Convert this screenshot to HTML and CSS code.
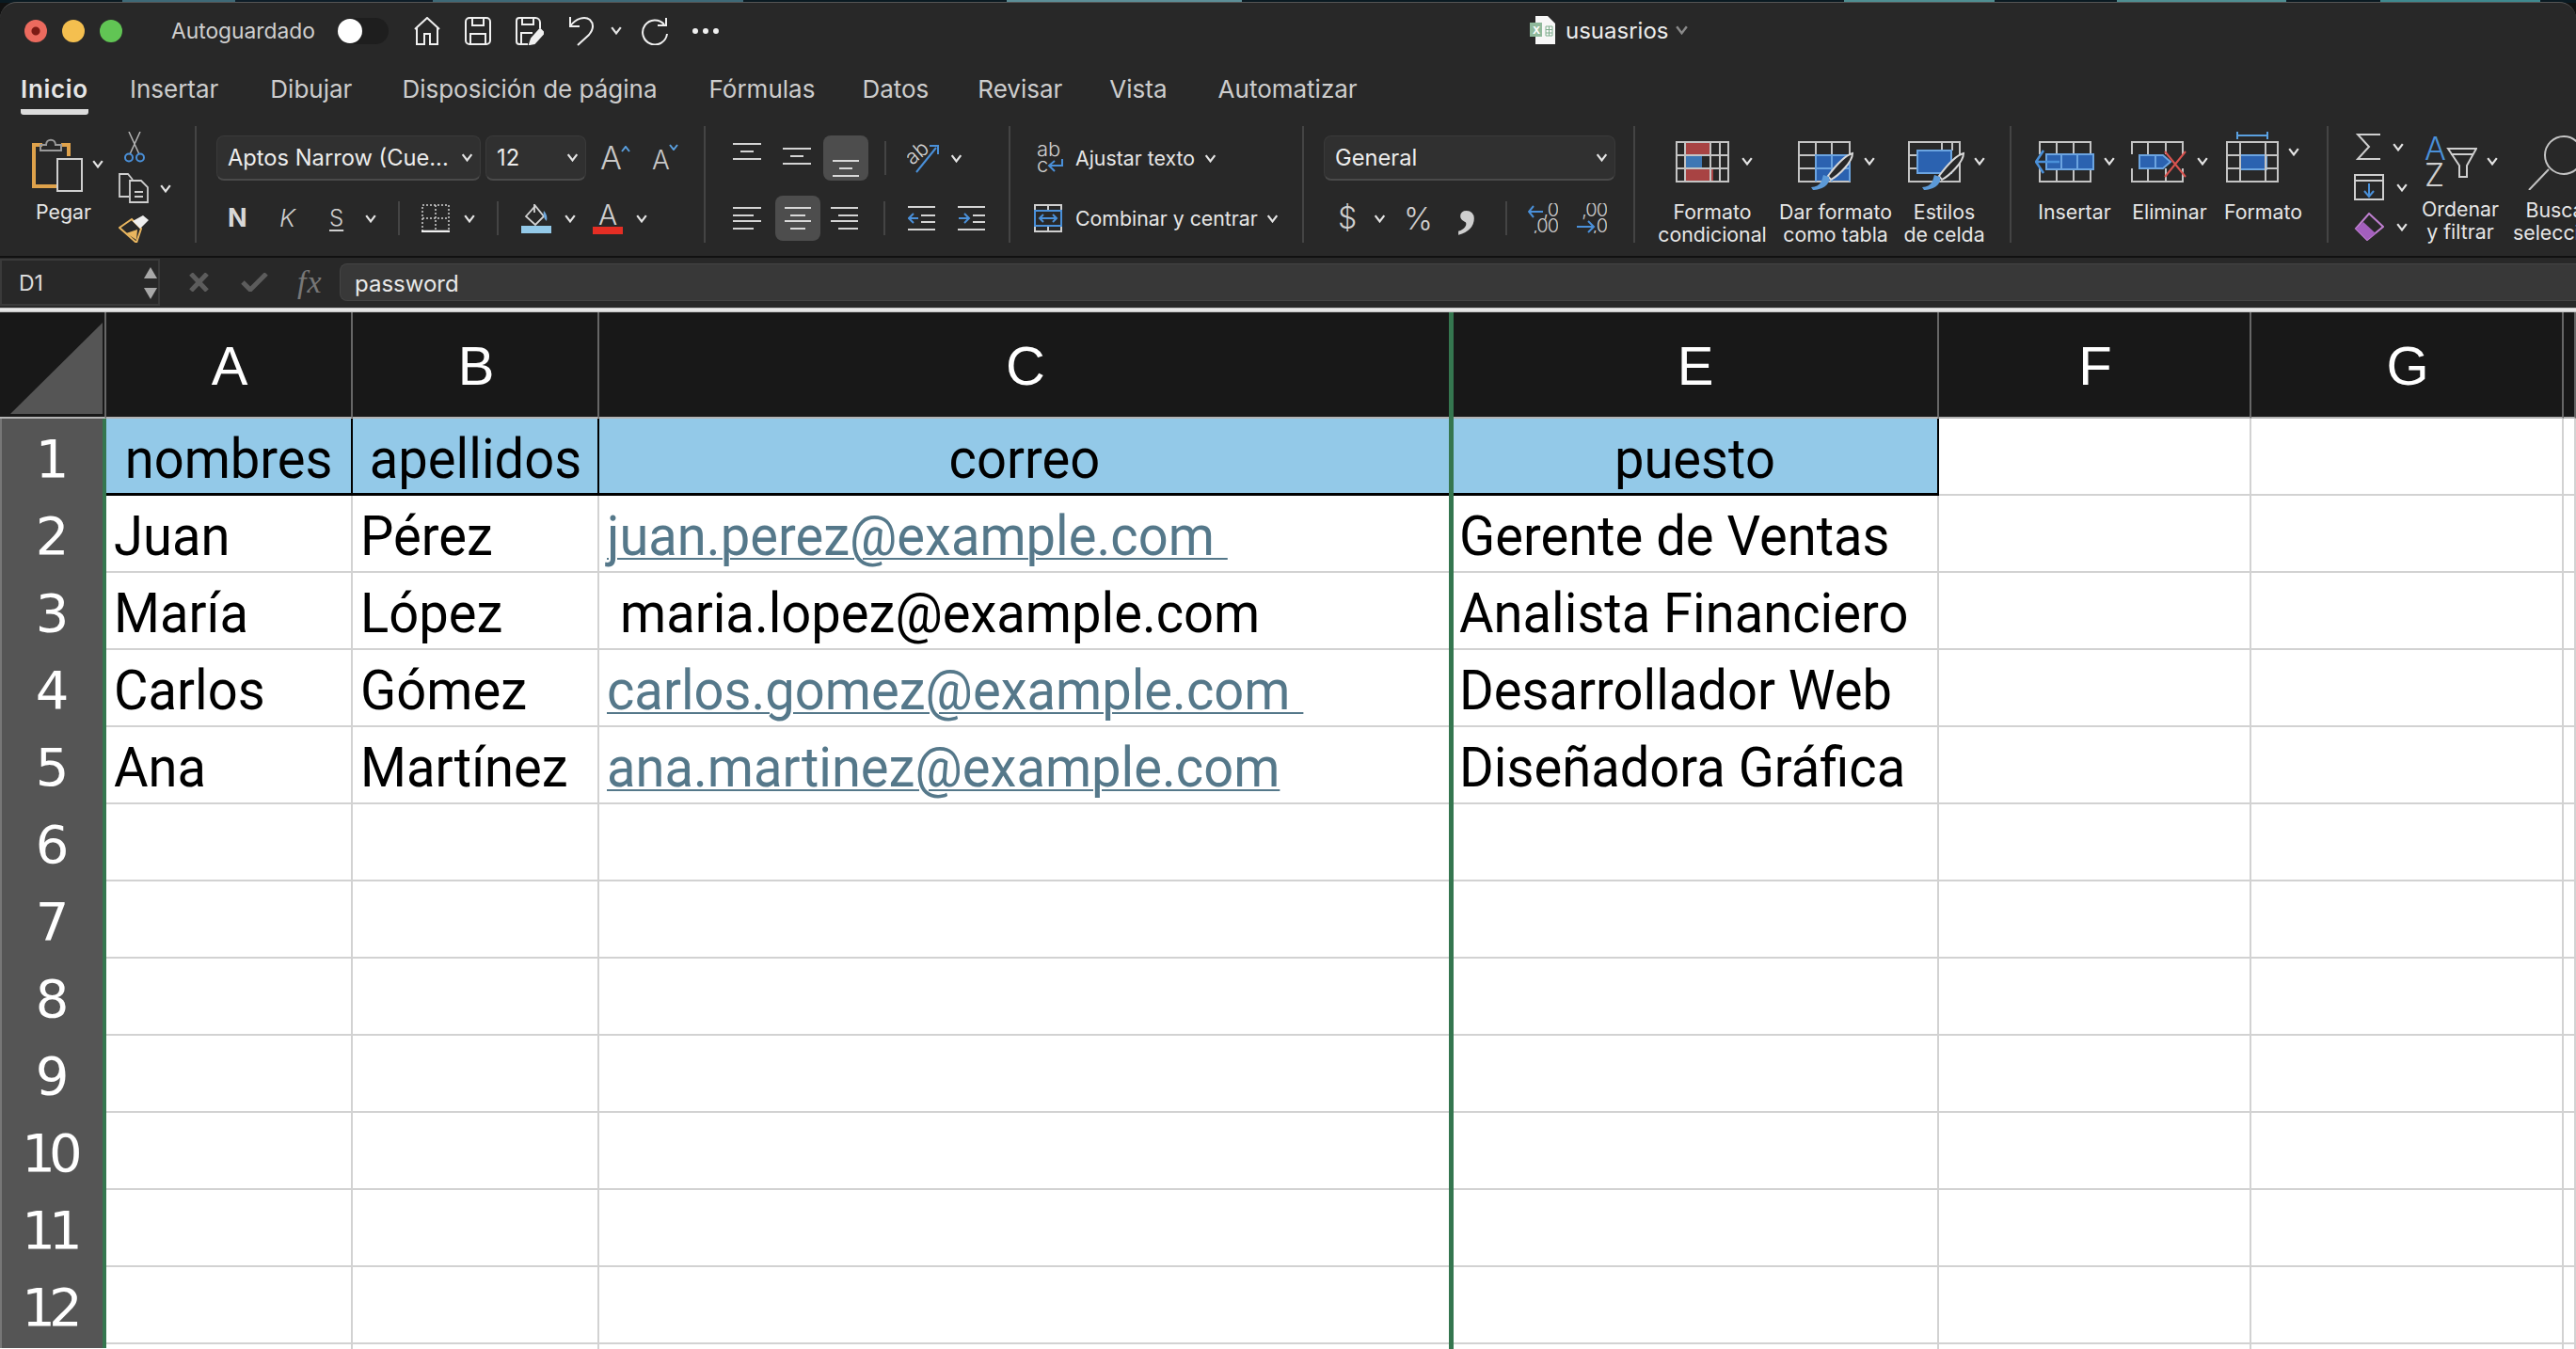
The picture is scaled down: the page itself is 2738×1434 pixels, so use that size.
FILE: index.html
```html
<!DOCTYPE html>
<html lang="es">
<head>
<meta charset="utf-8">
<title>usuasrios</title>
<link rel="stylesheet" href="styles.css">
</head>
<body>
<svg class="defs" width="0" height="0" aria-hidden="true">
  <symbol id="chev" viewBox="0 0 12 9"><path d="M1.2 1.2 6 7.4 10.8 1.2" fill="none" stroke="currentColor" stroke-width="2.2"/></symbol>
</svg>
<div class="wallpaper"></div>
<div class="app">
  <header class="titlebar">
    <div class="lights"><span class="light red"></span><span class="light yellow"></span><span class="light green"></span></div>
    <span class="autosave">Autoguardado</span>
    <span class="toggle"><span class="knob"></span></span>
    <div class="quick">
      <svg width="28" height="30" viewBox="0 0 28 30" fill="none" stroke="#f0f0f0" stroke-width="2"><path d="M1 13 14 1 27 13M3 11V29H11V18H17V29H25V11"/></svg>
      <svg width="28" height="30" viewBox="0 0 28 30" fill="none" stroke="#f0f0f0" stroke-width="2"><rect x="1" y="1" width="26" height="28" rx="4"/><path d="M8 1V9H20V1M6 29V18H22V29"/></svg>
      <svg width="30" height="30" viewBox="0 0 30 30" fill="none" stroke="#f0f0f0" stroke-width="2"><path d="M13 29H4A3 3 0 0 1 1 26V4A3 3 0 0 1 4 1H21A5 5 0 0 1 26 6V12M7 1V8H19V1M6 29V17H18"/><path d="M15 29 17 23 26 13 30 17 20 28Z" fill="#f0f0f0"/></svg>
      <svg width="28" height="32" viewBox="0 0 28 32" fill="none" stroke="#f0f0f0" stroke-width="2"><path d="M2 1V11H12M2 11C8 2 18 0 23 4 28 9 26 15 22 20L10 31"/></svg>
      <svg class="qchev" width="12" height="9"><use href="#chev"/></svg>
      <svg class="redo" width="28" height="30" viewBox="0 0 28 30" fill="none" stroke="#f0f0f0" stroke-width="2"><path d="M24 8A13 13 0 1 0 27 18M26 1V9H17"/></svg>
      <span class="dots"><i></i><i></i><i></i></span>
    </div>
    <div class="doc">
      <svg width="27" height="30" viewBox="0 0 27 30"><path d="M6 0H19L27 8V30H6Z" fill="#f7f7f7"/><rect x="0" y="7" width="13" height="15" fill="#8fb99b"/><text x="3" y="19" class="xmark">X</text><path d="M17 11h7v10h-7zM20.500 11v10M17 14.500h7M17 18h7" fill="none" stroke="#7fae8e" stroke-width="1"/></svg>
      <span class="docname">usuasrios</span>
      <svg class="docchev" width="15" height="10"><use href="#chev"/></svg>
    </div>
  </header>

  <nav class="tabs">
    <a class="tab active">Inicio</a><a class="tab">Insertar</a><a class="tab t-dib">Dibujar</a><a class="tab t-dis">Disposición de página</a><a class="tab">Fórmulas</a><a class="tab t-dat">Datos</a><a class="tab">Revisar</a><a class="tab t-vis">Vista</a><a class="tab">Automatizar</a>
  </nav>

  <section class="ribbon">
    <!-- Portapapeles -->
    <div class="group g-paste">
      <div class="paste">
        <div class="paste-top">
          <svg width="54" height="60" viewBox="0 0 54 60" fill="none"><path d="M11 10H2V54H26M31 10H39V22" stroke="#dfa24b" stroke-width="4"/><path d="M9 16V10H15C15 3 25 3 25 10H31V16Z" stroke="#9a9a9a" stroke-width="2"/><rect x="27" y="25" width="26" height="34" stroke="#cfcfcf" stroke-width="2" fill="#282828"/></svg>
          <svg class="chev" width="12" height="9"><use href="#chev"/></svg>
        </div>
        <span class="lbl pegar">Pegar</span>
      </div>
      <div class="clip-tools">
        <svg class="ic-sc" width="22" height="33" viewBox="0 0 22 33" fill="none"><path d="M5 0 16 24M17 0 6 24" stroke="#b5b5b5" stroke-width="1.500"/><circle cx="5" cy="27.500" r="4" stroke="#4a90d9" stroke-width="2"/><circle cx="17" cy="27.500" r="4" stroke="#4a90d9" stroke-width="2"/></svg>
        <div class="copy-row">
          <svg width="32" height="32" viewBox="0 0 32 32" fill="none" stroke="#cfcfcf" stroke-width="1.800"><path d="M11 25H1V1H10L15 7"/><path d="M12 8H24L31 15V31H12ZM17 20H26M17 25H26"/></svg>
          <svg class="chev" width="12" height="9"><use href="#chev"/></svg>
        </div>
        <svg class="ic-br" width="33" height="30" viewBox="0 0 33 30"><path d="M1 14 14 5 24 15 19 30Z" fill="#282828" stroke="#e9b65f" stroke-width="2"/><path d="M8 20 20 16 19 27Z" fill="#e9b65f"/><path d="M15 7 26 1 32 6 23 15Z" fill="#efefef"/></svg>
      </div>
    </div>

    <!-- Fuente -->
    <div class="group g-font">
      <div class="row font-top">
        <span class="select w281"><span>Aptos Narrow (Cue...</span><svg width="13" height="9"><use href="#chev"/></svg></span>
        <span class="select w107"><span>12</span><svg width="13" height="9"><use href="#chev"/></svg></span>
        <span class="grow"><b>A</b><svg width="10" height="7" viewBox="0 0 10 7"><path d="M1 6 5 1 9 6" fill="none" stroke="#5aa0e0" stroke-width="2"/></svg></span>
        <span class="grow small"><b>A</b><svg width="10" height="7" viewBox="0 0 10 7"><path d="M1 1 5 6 9 1" fill="none" stroke="#5aa0e0" stroke-width="2"/></svg></span>
      </div>
      <div class="row font-bot">
        <span class="fmt bold">N</span>
        <span class="fmt ital">K</span>
        <span class="fmt under">S</span>
        <svg width="12" height="9"><use href="#chev"/></svg>
        <span class="vsep"></span>
        <svg width="30" height="30" viewBox="0 0 30 30" fill="none" stroke="#cfcfcf"><path d="M1 1H29V29H1Z M15 1V29M1 15H29" stroke-width="1.500" stroke-dasharray="2 2"/><path d="M0 29H30" stroke="#f0f0f0" stroke-width="2.500"/></svg>
        <svg width="12" height="9"><use href="#chev"/></svg>
        <span class="vsep"></span>
        <svg width="32" height="32" viewBox="0 0 32 32" fill="none"><path d="M5 14 15 3 24 14 15 23Z" stroke="#d4d4d4" stroke-width="1.800"/><path d="M14 1V10" stroke="#d4d4d4" stroke-width="1.800"/><path d="M24 8C27 11 28 15 27 19 24 17 23 12 24 8Z" fill="#6fa8dc"/><rect x="0" y="24" width="32" height="8" fill="#93c9e8"/></svg>
        <svg width="12" height="9"><use href="#chev"/></svg>
        <span class="color-a"><b>A</b><i></i></span>
        <svg width="12" height="9"><use href="#chev"/></svg>
      </div>
    </div>

    <!-- Alineación -->
    <div class="group g-align">
      <div class="row al-top">
        <svg class="al-1" width="30" height="18" viewBox="0 0 30 18" stroke="#d4d4d4" stroke-width="2"><path d="M0 1H30M8 9H22M0 17H30"/></svg>
        <svg class="al-2" width="30" height="18" viewBox="0 0 30 18" stroke="#d4d4d4" stroke-width="2"><path d="M0 1H30M8 9H22M0 17H30"/></svg>
        <span class="btn on al-3"><svg width="28" height="18" viewBox="0 0 28 18" stroke="#d8d8d8" stroke-width="2"><path d="M0 1H28M7 9H21M0 17H28"/></svg></span>
        <span class="vsep"></span>
        <svg width="34" height="32" viewBox="0 0 34 32" fill="none"><text x="0" y="19" class="orient" transform="rotate(-40 10 14)">ab</text><path d="M10 31 31 5M24 3H33V12" stroke="#4a90d9" stroke-width="2"/></svg>
        <svg width="13" height="9"><use href="#chev"/></svg>
      </div>
      <div class="row al-bot">
        <svg width="30" height="24" viewBox="0 0 30 24" stroke="#d4d4d4" stroke-width="2"><path d="M0 1H30M0 9H22M0 15H30M0 23H22"/></svg>
        <span class="btn on"><svg width="28" height="24" viewBox="0 0 28 24" stroke="#d8d8d8" stroke-width="2"><path d="M0 1H28M6 9H22M0 15H28M6 23H22"/></svg></span>
        <svg width="29" height="24" viewBox="0 0 29 24" stroke="#d4d4d4" stroke-width="2"><path d="M0 1H29M8 9H29M0 15H29M8 23H29"/></svg>
        <span class="vsep"></span>
        <svg width="29" height="26" viewBox="0 0 29 26" fill="none" stroke-width="2"><path d="M0 1H29M14 10H29M14 17H29M0 25H29" stroke="#d4d4d4"/><path d="M11 13H1M6 8 1 13 6 18" stroke="#4a90d9"/></svg>
        <svg width="29" height="26" viewBox="0 0 29 26" fill="none" stroke-width="2"><path d="M0 1H29M16 10H29M16 17H29M0 25H29" stroke="#d4d4d4"/><path d="M1 13H12M7 8 12 13 7 18" stroke="#4a90d9"/></svg>
      </div>
    </div>

    <!-- Ajuste -->
    <div class="group g-wrap">
      <div class="row wr-top">
        <svg width="30" height="34" viewBox="0 0 30 34" fill="none"><text x="0" y="15" class="wrapt">ab</text><text x="0" y="32" class="wrapt">c</text><path d="M27 18V25H14M19 20 13 25 19 31" stroke="#4a90d9" stroke-width="2"/></svg>
        <span class="lbl">Ajustar texto</span>
        <svg width="13" height="9"><use href="#chev"/></svg>
      </div>
      <div class="row wr-bot">
        <svg width="30" height="30" viewBox="0 0 30 30" fill="none" stroke-width="2"><path d="M1 7V1H29V7M15 1V7M1 23V29H29V23M15 23V29" stroke="#cfcfcf"/><rect x="1" y="7" width="28" height="16" stroke="#4a90d9"/><path d="M6 15H24M10 11 6 15 10 19M20 11 24 15 20 19" stroke="#4a90d9"/></svg>
        <span class="lbl">Combinar y centrar</span>
        <svg width="13" height="9"><use href="#chev"/></svg>
      </div>
    </div>

    <!-- Número -->
    <div class="group g-num">
      <div class="row num-top">
        <span class="select w310"><span>General</span><svg width="13" height="9"><use href="#chev"/></svg></span>
      </div>
      <div class="row num-bot">
        <span class="fmt cur">$</span>
        <svg width="13" height="9"><use href="#chev"/></svg>
        <span class="fmt pct">%</span>
        <span class="fmt com">,</span>
        <span class="vsep"></span>
        <svg width="32" height="32" viewBox="0 0 32 32" fill="none"><text x="32" y="14" class="dec">,0</text><text x="32" y="31" class="dec">,00</text><path d="M16 9H1M6 3 1 9 6 15" stroke="#4a90d9" stroke-width="2"/></svg>
        <svg width="32" height="32" viewBox="0 0 32 32" fill="none"><text x="32" y="14" class="dec">,00</text><text x="32" y="31" class="dec">,0</text><path d="M0 25H18M12 19 18 25 12 31" stroke="#4a90d9" stroke-width="2"/></svg>
      </div>
    </div>

    <!-- Estilos -->
    <div class="group g-styles">
      <div class="big b-cf">
        <div class="big-ic">
          <svg width="60" height="54" viewBox="0 0 60 54" fill="none"><rect x="10" y="0" width="26" height="15" fill="#a84343"/><rect x="10" y="16" width="18" height="13" fill="#3e77b4"/><rect x="10" y="29" width="30" height="15" fill="#a84343"/><path d="M1 1H56V43H1ZM1 15H56M1 29H56M10 1V43M37 1V43M47 1V43" stroke="#c4c4c4" stroke-width="2"/></svg>
          <svg class="chev" width="12" height="9"><use href="#chev"/></svg>
        </div>
        <span class="lbl">Formato<br>condicional</span>
      </div>
      <div class="big b-tb">
        <div class="big-ic">
          <svg width="60" height="54" viewBox="0 0 60 54" fill="none"><rect x="18" y="14" width="37" height="30" fill="#2b62b0"/><path d="M1 1H55V43H1ZM1 15H18M1 29H18M19 1V14M36 1V14" stroke="#c4c4c4" stroke-width="2"/><path d="M18 15H55M18 29H55M19 15V43M36 15V43M55 15V43" stroke="#6ba4e0" stroke-width="2"/><path d="M58 13C58 22 44 36 35 41L32 37C38 29 50 15 58 13Z" fill="#282828" stroke="#d8d8d8" stroke-width="2"/><path d="M16 52C24 52 35 47 33 38L27 36C25 42 25 48 14 49Z" fill="#5c9ad8"/></svg>
          <svg class="chev" width="12" height="9"><use href="#chev"/></svg>
        </div>
        <span class="lbl">Dar formato<br>como tabla</span>
      </div>
      <div class="big b-st">
        <div class="big-ic">
          <svg width="60" height="54" viewBox="0 0 60 54" fill="none"><path d="M1 1H55V43H1ZM1 15H10M1 29H10M36 1V10M47 1V10" stroke="#c4c4c4" stroke-width="2"/><rect x="10" y="10" width="36" height="24" fill="#2b62b0" stroke="#6ba4e0" stroke-width="2"/><path d="M59 13C59 22 45 36 36 41L33 37C39 29 51 15 59 13Z" fill="#282828" stroke="#d8d8d8" stroke-width="2"/><path d="M17 52C25 52 36 47 34 38L28 36C26 42 26 48 15 49Z" fill="#5c9ad8"/></svg>
          <svg class="chev" width="12" height="9"><use href="#chev"/></svg>
        </div>
        <span class="lbl">Estilos<br>de celda</span>
      </div>
    </div>

    <!-- Celdas -->
    <div class="group g-cells">
      <div class="big b-ins">
        <div class="big-ic">
          <svg width="63" height="54" viewBox="0 0 63 54" fill="none"><path d="M5 14V1H59V14M5 29V43H59V29M23 1V14M41 1V14M23 29V43M41 29V43" stroke="#c4c4c4" stroke-width="2"/><rect x="12" y="14" width="50" height="16" fill="#2b62b0" stroke="#6ba4e0" stroke-width="2"/><path d="M28 14V30M45 14V30" stroke="#6ba4e0" stroke-width="2"/><path d="M26 22H2M9 10 1 22 9 34" stroke="#4a90d9" stroke-width="2.500"/></svg>
          <svg class="chev" width="12" height="9"><use href="#chev"/></svg>
        </div>
        <span class="lbl">Insertar</span>
      </div>
      <div class="big b-del">
        <div class="big-ic">
          <svg width="60" height="54" viewBox="0 0 60 54" fill="none"><path d="M1 14V1H55V14M1 29V43H55V29M18 1V14M37 1V14M18 29V43M37 29V43" stroke="#c4c4c4" stroke-width="2"/><path d="M9 15H34L42 22 34 29H9Z" fill="#2b62b0" stroke="#6ba4e0" stroke-width="2"/><path d="M26 15V29" stroke="#6ba4e0" stroke-width="2"/><path d="M36 11 58 38M58 11 36 38" stroke="#d9534f" stroke-width="2"/></svg>
          <svg class="chev" width="12" height="9"><use href="#chev"/></svg>
        </div>
        <span class="lbl">Eliminar</span>
      </div>
      <div class="big b-fmt">
        <div class="big-ic tall">
          <svg width="56" height="54" viewBox="0 0 56 54" fill="none"><path d="M12 4H44M12 0V8M44 0V8" stroke="#5aa0e0" stroke-width="2"/><rect x="15" y="25" width="28" height="15" fill="#2b62b0" stroke="#6ba4e0" stroke-width="2"/><path d="M1 11H55V53H1ZM1 25H15M43 25H55M1 39H15M43 39H55M15 11V53M42 11V53" stroke="#c4c4c4" stroke-width="2"/></svg>
          <svg class="chev" width="12" height="9"><use href="#chev"/></svg>
        </div>
        <span class="lbl">Formato</span>
      </div>
    </div>

    <!-- Edición -->
    <div class="group g-edit">
      <div class="edit-col">
        <div class="edit-row">
          <svg width="26" height="28" viewBox="0 0 26 28" fill="none" stroke="#cfcfcf" stroke-width="2"><path d="M26 1H2L14 14 2 27H26"/></svg>
          <svg width="12" height="9"><use href="#chev"/></svg>
        </div>
        <div class="edit-row">
          <svg width="32" height="28" viewBox="0 0 32 28" fill="none"><path d="M1 1H31V27H1ZM1 7H31" stroke="#cfcfcf" stroke-width="2"/><path d="M16 10V24M11 18 16 24 21 18" stroke="#4a90d9" stroke-width="2"/></svg>
          <svg width="12" height="9"><use href="#chev"/></svg>
        </div>
        <div class="edit-row">
          <svg width="32" height="30" viewBox="0 0 32 30" fill="none"><path d="M16 1 31 15 14 29 2 17Z" stroke="#bf7fd0" stroke-width="2"/><path d="M2 17 10 10 23 22 14 29Z" fill="#a35fbd"/></svg>
          <svg width="12" height="9"><use href="#chev"/></svg>
        </div>
      </div>
      <div class="big b-sort">
        <div class="big-ic">
          <svg width="56" height="54" viewBox="0 0 56 54" fill="none"><text x="0" y="25" class="az blue">A</text><text x="0" y="53" class="az">Z</text><path d="M25 13H55L45 31V43H37V31Z" stroke="#cfcfcf" stroke-width="2"/><path d="M28 19H52" stroke="#cfcfcf" stroke-width="2"/></svg>
          <svg class="chev" width="12" height="9"><use href="#chev"/></svg>
        </div>
        <span class="lbl">Ordenar<br>y filtrar</span>
      </div>
      <div class="big b-find">
        <div class="big-ic">
          <svg width="60" height="58" viewBox="0 0 60 58" fill="none" stroke="#c4c4c4" stroke-width="2"><circle cx="38" cy="21" r="20"/><path d="M22 36 1 58"/></svg>
        </div>
        <span class="lbl">Buscar y<br>seleccionar</span>
      </div>
    </div>
  </section>

  <section class="formula">
    <div class="namebox"><span>D1</span><span class="spin"><i class="up"></i><i class="down"></i></span></div>
    <div class="fx-btns">
      <svg width="21" height="20" viewBox="0 0 21 20" stroke="#5c5c5c" stroke-width="5"><path d="M2 1 19 19M19 1 2 19"/></svg>
      <svg width="29" height="20" viewBox="0 0 29 20" fill="none" stroke="#5c5c5c" stroke-width="5"><path d="M2 10 10 18 27 1"/></svg>
      <span class="fx">fx</span>
    </div>
    <div class="finput">password</div>
  </section>
</div>

<div class="divider"></div>

<main class="sheet">
  <div class="corner"><span class="tri"></span></div>
  <div class="ch">A</div><div class="ch">B</div><div class="ch">C</div><div class="ch">E</div><div class="ch">F</div><div class="ch">G</div><div class="ch"></div>

  <div class="rh">1</div>
  <div class="c hd"><span class="t">nombres</span></div><div class="c hd"><span class="t">apellidos</span></div><div class="c hd"><span class="t">correo</span></div><div class="c hd"><span class="t">puesto</span></div><div class="c"></div><div class="c"></div><div class="c"></div>

  <div class="rh">2</div>
  <div class="c"><span class="t">Juan</span></div><div class="c"><span class="t">Pérez</span></div><div class="c"><a class="t link">juan.perez@example.com </a></div><div class="c"><span class="t">Gerente de Ventas</span></div><div class="c"></div><div class="c"></div><div class="c"></div>

  <div class="rh">3</div>
  <div class="c"><span class="t">María</span></div><div class="c"><span class="t">López</span></div><div class="c ind"><span class="t">maria.lopez@example.com</span></div><div class="c"><span class="t">Analista Financiero</span></div><div class="c"></div><div class="c"></div><div class="c"></div>

  <div class="rh">4</div>
  <div class="c"><span class="t">Carlos</span></div><div class="c"><span class="t">Gómez</span></div><div class="c"><a class="t link">carlos.gomez@example.com </a></div><div class="c"><span class="t">Desarrollador Web</span></div><div class="c"></div><div class="c"></div><div class="c"></div>

  <div class="rh">5</div>
  <div class="c"><span class="t">Ana</span></div><div class="c"><span class="t">Martínez</span></div><div class="c"><a class="t link">ana.martinez@example.com</a></div><div class="c"><span class="t">Diseñadora Gráfica</span></div><div class="c"></div><div class="c"></div><div class="c"></div>

  <div class="rh">6</div><div class="c"></div><div class="c"></div><div class="c"></div><div class="c"></div><div class="c"></div><div class="c"></div><div class="c"></div>
  <div class="rh">7</div><div class="c"></div><div class="c"></div><div class="c"></div><div class="c"></div><div class="c"></div><div class="c"></div><div class="c"></div>
  <div class="rh">8</div><div class="c"></div><div class="c"></div><div class="c"></div><div class="c"></div><div class="c"></div><div class="c"></div><div class="c"></div>
  <div class="rh">9</div><div class="c"></div><div class="c"></div><div class="c"></div><div class="c"></div><div class="c"></div><div class="c"></div><div class="c"></div>
  <div class="rh">10</div><div class="c"></div><div class="c"></div><div class="c"></div><div class="c"></div><div class="c"></div><div class="c"></div><div class="c"></div>
  <div class="rh">11</div><div class="c"></div><div class="c"></div><div class="c"></div><div class="c"></div><div class="c"></div><div class="c"></div><div class="c"></div>
  <div class="rh">12</div><div class="c"></div><div class="c"></div><div class="c"></div><div class="c"></div><div class="c"></div><div class="c"></div><div class="c"></div>
  <div class="rh"></div><div class="c"></div><div class="c"></div><div class="c"></div><div class="c"></div><div class="c"></div><div class="c"></div><div class="c"></div>

  <span class="selline"></span>
</main>
</body>
</html>
```

FILE: styles.css
```css
* { box-sizing: border-box; }
html, body { margin: 0; height: 100%; }
body {
  width: 2738px;
  height: 1434px;
  overflow: hidden;
  background: #111;
  font-family: "Inter", "Liberation Sans", sans-serif;
  color: #e8e8e8;
  display: flex;
  flex-direction: column;
}
.defs { position: absolute; }
svg { display: block; flex: none; color: #e4e4e4; }

.wallpaper {
  height: 3px;
  flex: none;
  background: linear-gradient(90deg, #0a1a22 0 130px, #3e6a78 130px 250px, #0d1d28 250px 460px, #3e6a78 460px 790px, #0a1a22 790px 1070px, #5d8f98 1070px 1320px, #0a1a22 1320px 1960px, #4f8f93 1960px 2120px, #0a1a22 2120px 2250px, #4f8f93 2250px 2430px, #0a1a22 2430px 2530px, #3f8a90 2530px 2700px, #0a1a22 2700px);
}
.app {
  flex: none;
  height: 325px;
  background: #282828;
  border-top: 1px solid #555;
  border-radius: 18px 18px 0 0;
  display: flex;
  flex-direction: column;
  margin-top: -1px;
}

/* title bar */
.titlebar {
  height: 59px;
  flex: none;
  display: flex;
  align-items: center;
  padding-left: 26px;
  position: relative;
}
.lights { display: flex; gap: 16px; }
.light { width: 24px; height: 24px; border-radius: 50%; display: block; }
.red { background: radial-gradient(circle, #7d1a14 0 4px, #ec6a5e 5px); }
.yellow { background: #f4bf4f; }
.green { background: #61c554; }
.autosave { margin-left: 52px; width: 177px; font-size: 22.800px; color: #cfcfcf; white-space: nowrap; }
.toggle { width: 54px; height: 28px; border-radius: 14px; background: #1e1e1e; display: flex; align-items: center; }
.knob { width: 26px; height: 26px; border-radius: 50%; background: #fff; display: block; }
.quick { display: flex; align-items: center; margin-left: 27px; gap: 26px; }
.qchev { margin-left: -9px; margin-right: -5px; }
.dots { display: flex; gap: 5px; margin-left: 0; }
.dots i { width: 6px; height: 6px; background: #f0f0f0; border-radius: 50%; display: block; }
.doc { position: absolute; left: 1626px; top: 14px; display: flex; align-items: center; gap: 11px; }
.xmark { font: 700 11px "Inter", sans-serif; fill: #fff; }
.docname { font-size: 24px; color: #ececec; width: 108px; }
.docchev { color: #8a8a8a; margin-left: -3px; }

/* tabs */
.tabs {
  height: 62px;
  flex: none;
  display: flex;
  gap: 50px;
  padding-left: 22px;
  font-size: 26px;
}
.tab { height: 60px; padding-top: 17px; color: #cdcdcd; white-space: nowrap; line-height: 32px; }
.tab.active { color: #e6e6e6; font-weight: 600; letter-spacing: .7px; margin-right: -6px; border-bottom: 6px solid #dcdcdc; border-radius: 0 0 3px 3px; height: 60px; }
.t-dib { margin: 0 3px 0 5px; }
.t-dis { margin-right: 5px; }
.t-dat { margin-right: 2px; }
.t-vis { margin-right: 4px; }

/* ribbon */
.ribbon {
  height: 150px;
  flex: none;
  display: flex;
  padding-top: 10px;
  overflow: hidden;
  border-bottom: 2px solid #111;
}
.group { height: 124px; flex: none; border-right: 2px solid #444; position: relative; }
.g-paste { width: 209px; display: flex; padding: 10px 0 0 34px; }
.g-font { width: 541px; }
.g-align { width: 324px; }
.g-wrap { width: 312px; }
.g-num { width: 352px; }
.g-styles { width: 400px; display: flex; }
.g-cells { width: 337px; display: flex; }
.g-edit { width: 420px; border-right: 0; display: flex; }

.lbl { font-size: 21.300px; line-height: 24px; color: #e6e6e6; white-space: nowrap; }
.row { display: grid; align-items: center; justify-items: start; height: 48px; }
.row:first-child { margin: 10px 0 16px; }
.vsep { width: 2px; height: 36px; background: #444; display: block; }

.paste { width: 92px; }
.paste-top { display: flex; gap: 10px; align-items: flex-start; }
.paste-top .chev { margin-top: 26px; }
.pegar { display: block; margin: 9px 0 0 4px; }
.clip-tools { display: flex; flex-direction: column; margin-top: -4px; }
.ic-sc { margin: 0 0 11px 6px; }
.copy-row { display: flex; align-items: center; gap: 12px; height: 32px; }
.ic-br { margin-top: 12px; }

.select {
  height: 48px;
  background: #303030;
  border: 1px solid #3a3a3a;
  border-bottom: 2px solid #4a4a4a;
  border-radius: 8px;
  display: flex;
  align-items: center;
  justify-content: space-between;
  padding: 0 7px 0 11px;
  font-size: 23.700px;
  color: #ececec;
  white-space: nowrap;
}
.w281 { width: 281px; }
.w107 { width: 107px; }
.w310 { width: 310px; }
.font-top { grid-template-columns: 286px 122px 55px 30px; padding-left: 21px; }
.grow { display: flex; align-items: flex-start; }
.grow b { font-weight: 300; font-size: 34px; color: #c8c8c8; line-height: 34px; }
.grow svg { margin: 4px 0 0 -1px; }
.grow.small b { font-size: 28px; line-height: 30px; margin-top: 4px; }
.grow.small svg { margin-top: 2px; }
.font-bot { grid-template-columns: 55px 53px 38px 35px 25px 45px 35px 26px 46px 30px 46px 12px; padding-left: 33px; height: 48px; }
.fmt { font-size: 26px; color: #cfcfcf; line-height: 30px; }
.bold { font-weight: 700; font-size: 27px; color: #d8d8d8; }
.ital { font-style: italic; font-weight: 300; }
.under { font-weight: 300; text-decoration: underline; text-underline-offset: 4px; font-size: 24px; }
.color-a { display: flex; flex-direction: column; align-items: center; width: 32px; }
.color-a b { font-weight: 300; font-size: 30px; color: #cfcfcf; line-height: 26px; }
.color-a i { width: 32px; height: 8px; background: #e52e24; display: block; }

.al-top { grid-template-columns: 53px 43px 65px 24px 46px 13px; padding-left: 29px; }
.al-bot { grid-template-columns: 44px 60px 56px 26px 53px 29px; padding-left: 29px; }
.btn { width: 48px; height: 48px; background: #4d4d4d; border-radius: 8px; display: flex; align-items: center; justify-content: center; }
.al-bot .btn { margin-left: 1px; }
.al-1 { align-self: start; margin-top: 8px; }
.al-2 { align-self: start; margin-top: 13px; }
.al-3 svg { margin-top: 22px; }
.orient { font: 300 22px "Inter", sans-serif; fill: #d4d4d4; }

.wr-top { grid-template-columns: 41px 137px 13px; padding-left: 28px; }
.wr-bot { grid-template-columns: 44px 203px 13px; padding-left: 25px; }
.wrapt { font: 300 22px "Inter", sans-serif; fill: #cfcfcf; }

.num-top { padding-left: 21px; grid-template-columns: 310px; }
.num-bot { grid-template-columns: 38px 32px 60px 48px 24px 52px 32px; padding-left: 36px; }
.cur { font-size: 32px; font-weight: 300; }
.pct { font-size: 33px; font-weight: 300; }
.com { font: 700 84px/30px "Liberation Serif", serif; margin-top: -48px; margin-left: -3px; }
.dec { font: 300 20px "Inter", sans-serif; fill: #cfcfcf; text-anchor: end; letter-spacing: -1px; }

.big { display: flex; flex-direction: column; align-items: center; padding-top: 16px; position: relative; flex: none; }
.big-ic { height: 54px; width: 100%; display: flex; align-items: flex-start; position: relative; }
.big-ic .chev { margin-top: 17px; margin-left: 10px; }
.big .lbl { text-align: center; margin-top: 9px; }
.tall { margin-top: -10px; height: 64px; }
.b-cf { width: 114px; margin-left: 25px; }
.b-cf .big-ic { padding-left: 18px; width: 120px; align-self: flex-start; }
.b-tb { width: 120px; margin-left: 14px; }
.b-tb .big-ic { padding-left: 20px; }
.b-st { width: 85px; margin-left: 13px; }
.b-st .big-ic { padding-left: 4px; width: 100px; align-self: flex-start; }
.b-ins { width: 78px; margin-left: 28px; }
.b-ins .big-ic { padding-left: 0; width: 90px; align-self: flex-start; margin-left: -3px; }
.b-del { width: 80px; margin-left: 22px; }
.b-del .big-ic { width: 90px; align-self: flex-start; margin-left: -1px; }
.b-fmt { width: 83px; margin-left: 18px; }
.b-fmt .big-ic { width: 90px; align-self: flex-start; margin-left: 2px; }
.edit-col { width: 72px; margin-left: 27px; padding-top: 8px; display: flex; flex-direction: column; flex: none; }
.edit-row { display: flex; align-items: center; gap: 13px; height: 28px; margin-bottom: 15px; padding-left: 2px; }
.edit-row:nth-child(2) { padding-left: 0; }
.edit-row:nth-child(3) { padding-left: 0; margin-top: -1px; }
.b-sort { width: 82px; margin-left: 0; padding-top: 11px; }
.b-sort .big-ic { height: 59px; align-self: flex-start; width: 100px; margin-left: 3px; }
.b-sort .big-ic .chev { margin-top: 22px; }
.b-find { width: 140px; margin-left: 15px; padding-top: 10px; align-items: flex-start; }
.b-find .big-ic { height: 60px; margin-left: 16px; }
.b-find .lbl { text-align: center; width: 115px; }
.az { font: 300 34px "Inter", sans-serif; fill: #cfcfcf; }
.az.blue { fill: #4a90d9; }

/* formula bar */
.formula { height: 52px; flex: none; display: flex; align-items: center; background: #282828; }
.namebox { width: 170px; height: 50px; border: 2px solid #3a3a3a; display: flex; align-items: center; justify-content: space-between; padding: 2px 0 0 18px; font-size: 23px; color: #dcdcdc; }
.spin { display: flex; flex-direction: column; gap: 10px; margin-right: 1px; }
.spin i { display: block; width: 0; height: 0; border-left: 7px solid transparent; border-right: 7px solid transparent; }
.spin .up { border-bottom: 12px solid #a8a8a8; }
.spin .down { border-top: 12px solid #a8a8a8; }
.fx-btns { width: 191px; display: flex; align-items: center; padding-left: 31px; gap: 34px; }
.fx { font: italic 34px "Liberation Serif", serif; color: #777; margin-left: -3px; letter-spacing: 1px; }
.finput { flex: 1; height: 40px; background: #383838; border: 1px solid #444; border-right: 0; border-radius: 8px 0 0 8px; padding-left: 15px; font-size: 24px; line-height: 41px; color: #e8e8e8; }

.divider { height: 5px; flex: none; background: linear-gradient(#bdbdbd, #f4f4f4 45%, #bdbdbd); }

/* sheet */
.sheet {
  flex: 1;
  position: relative;
  background: #fff;
  display: grid;
  grid-template-columns: 113px 262px 262px 906px 518px 332px 332px 13px;
  grid-template-rows: 113px repeat(12, 82px) 4px;
  overflow: hidden;
  color: #000;
  font-family: "Roboto", "Liberation Sans", sans-serif;
  font-size: 60px;
}
.corner { background: #181818; border-bottom: 2px solid #b4b4b4; border-right: 2px solid #666; position: relative; display: flex; align-items: flex-end; justify-content: flex-end; padding: 0 2px 3px 0; }
.tri { display: block; width: 98px; height: 97px; background: #555; clip-path: polygon(100% 0, 100% 100%, 0 100%); }
.ch {
  background: #181818;
  color: #fff;
  border-right: 2px solid #666;
  border-bottom: 2px solid #b4b4b4;
  display: flex;
  align-items: center;
  justify-content: center;
  padding: 2px 0 0 2px;
  font-family: "Liberation Sans", sans-serif;
  font-size: 58px;
}
.rh {
  background: #555;
  color: #fff;
  border-left: 2px solid #777;
  border-right: 4px solid #35764f;
  display: flex;
  align-items: center;
  justify-content: center;
  font-family: "DejaVu Sans", sans-serif;
  letter-spacing: -7px;
  padding-right: 7px;
  padding-top: 2px;
  font-weight: 400;
  font-size: 56px;
}
.c {
  border-right: 2px solid #d2d2d2;
  border-bottom: 2px solid #d2d2d2;
  padding: 0 0 0 8px;
  line-height: 85px;
  height: 82px;
  white-space: pre;
  min-width: 0;
}
.t { display: inline-block; transform: scaleX(.935); transform-origin: 0 50%; }
.hd { background: #93c9e8; border-right: 2px solid #000; border-bottom: 3px solid #000; text-align: center; padding: 0; }
.hd .t { transform-origin: 50% 50%; }
.ind { padding-left: 22px; }
.link { color: #55788a; text-decoration: underline; text-decoration-thickness: 2px; text-underline-offset: 3px; }
.selline { position: absolute; left: 1540px; top: 0; bottom: 0; width: 5px; background: #35764f; }
```
